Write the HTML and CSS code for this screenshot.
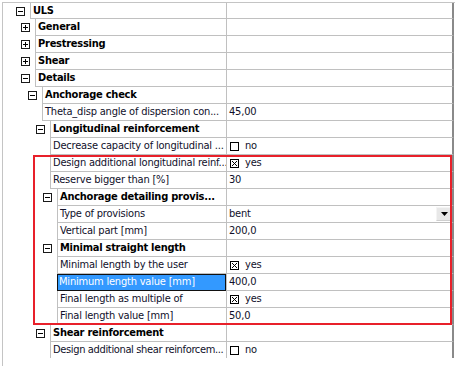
FILE: index.html
```html
<!DOCTYPE html>
<html>
<head>
<meta charset="utf-8">
<link rel="stylesheet" href="styles.css">
</head>
<body>
<div class="tree">
  <div class="rows">
    <div class="row group l0"><span class="exp"><svg width="9" height="9" viewBox="0 0 9 9"><rect x="0.5" y="0.5" width="8" height="8" fill="#fff" stroke="#1a1a1a"/><path d="M2 4.5H7" stroke="#000"/></svg></span><div class="name">ULS</div><div class="val"></div></div>
    <div class="row group l1"><span class="exp"><svg width="9" height="9" viewBox="0 0 9 9"><rect x="0.5" y="0.5" width="8" height="8" fill="#fff" stroke="#1a1a1a"/><path d="M2 4.5H7M4.5 2V7" stroke="#000"/></svg></span><div class="name">General</div><div class="val"></div></div>
    <div class="row group l1"><span class="exp"><svg width="9" height="9" viewBox="0 0 9 9"><rect x="0.5" y="0.5" width="8" height="8" fill="#fff" stroke="#1a1a1a"/><path d="M2 4.5H7M4.5 2V7" stroke="#000"/></svg></span><div class="name">Prestressing</div><div class="val"></div></div>
    <div class="row group l1"><span class="exp"><svg width="9" height="9" viewBox="0 0 9 9"><rect x="0.5" y="0.5" width="8" height="8" fill="#fff" stroke="#1a1a1a"/><path d="M2 4.5H7M4.5 2V7" stroke="#000"/></svg></span><div class="name">Shear</div><div class="val"></div></div>
    <div class="row group l1"><span class="exp"><svg width="9" height="9" viewBox="0 0 9 9"><rect x="0.5" y="0.5" width="8" height="8" fill="#fff" stroke="#1a1a1a"/><path d="M2 4.5H7" stroke="#000"/></svg></span><div class="name">Details</div><div class="val"></div></div>
    <div class="row group l2"><span class="exp"><svg width="9" height="9" viewBox="0 0 9 9"><rect x="0.5" y="0.5" width="8" height="8" fill="#fff" stroke="#1a1a1a"/><path d="M2 4.5H7" stroke="#000"/></svg></span><div class="name">Anchorage check</div><div class="val"></div></div>
    <div class="row leaf l2"><span class="exp"></span><div class="name">Theta_disp angle of dispersion con...</div><div class="val">45,00</div></div>
    <div class="row group l3"><span class="exp"><svg width="9" height="9" viewBox="0 0 9 9"><rect x="0.5" y="0.5" width="8" height="8" fill="#fff" stroke="#1a1a1a"/><path d="M2 4.5H7" stroke="#000"/></svg></span><div class="name">Longitudinal reinforcement</div><div class="val"></div></div>
    <div class="row leaf l3"><span class="exp"></span><div class="name">Decrease capacity of longitudinal ...</div><div class="val"><span class="chk"><svg width="9" height="9" viewBox="0 0 9 9"><rect x="0.5" y="0.5" width="8" height="8" fill="#fff" stroke="#000"/></svg></span>no</div></div>
    <div class="row leaf l3"><span class="exp"></span><div class="name">Design additional longitudinal reinf...</div><div class="val"><span class="chk"><svg width="9" height="9" viewBox="0 0 9 9"><rect x="0.5" y="0.5" width="8" height="8" fill="#fff" stroke="#000"/><path d="M2 2L7 7M7 2L2 7" stroke="#000"/></svg></span>yes</div></div>
    <div class="row leaf l3"><span class="exp"></span><div class="name">Reserve bigger than [%]</div><div class="val">30</div></div>
    <div class="row group l4"><span class="exp"><svg width="9" height="9" viewBox="0 0 9 9"><rect x="0.5" y="0.5" width="8" height="8" fill="#fff" stroke="#1a1a1a"/><path d="M2 4.5H7" stroke="#000"/></svg></span><div class="name">Anchorage detailing provis...</div><div class="val"></div></div>
    <div class="row leaf l4"><span class="exp"></span><div class="name">Type of provisions</div><div class="val">bent<span class="drop"><svg width="7" height="4" viewBox="0 0 7 4"><path d="M0 0H7L3.5 4Z" fill="#000"/></svg></span></div></div>
    <div class="row leaf l4"><span class="exp"></span><div class="name">Vertical part [mm]</div><div class="val">200,0</div></div>
    <div class="row group l4"><span class="exp"><svg width="9" height="9" viewBox="0 0 9 9"><rect x="0.5" y="0.5" width="8" height="8" fill="#fff" stroke="#1a1a1a"/><path d="M2 4.5H7" stroke="#000"/></svg></span><div class="name">Minimal straight length</div><div class="val"></div></div>
    <div class="row leaf l4"><span class="exp"></span><div class="name">Minimal length by the user</div><div class="val"><span class="chk"><svg width="9" height="9" viewBox="0 0 9 9"><rect x="0.5" y="0.5" width="8" height="8" fill="#fff" stroke="#000"/><path d="M2 2L7 7M7 2L2 7" stroke="#000"/></svg></span>yes</div></div>
    <div class="row leaf l4 selected"><span class="exp"></span><div class="name">Minimum length value [mm]</div><div class="val">400,0</div></div>
    <div class="row leaf l4"><span class="exp"></span><div class="name">Final length as multiple of</div><div class="val"><span class="chk"><svg width="9" height="9" viewBox="0 0 9 9"><rect x="0.5" y="0.5" width="8" height="8" fill="#fff" stroke="#000"/><path d="M2 2L7 7M7 2L2 7" stroke="#000"/></svg></span>yes</div></div>
    <div class="row leaf l4"><span class="exp"></span><div class="name">Final length value [mm]</div><div class="val">50,0</div></div>
    <div class="row group l3"><span class="exp"><svg width="9" height="9" viewBox="0 0 9 9"><rect x="0.5" y="0.5" width="8" height="8" fill="#fff" stroke="#1a1a1a"/><path d="M2 4.5H7" stroke="#000"/></svg></span><div class="name">Shear reinforcement</div><div class="val"></div></div>
    <div class="row leaf l3"><span class="exp"></span><div class="name tight">Design additional shear reinforcem...</div><div class="val"><span class="chk"><svg width="9" height="9" viewBox="0 0 9 9"><rect x="0.5" y="0.5" width="8" height="8" fill="#fff" stroke="#000"/></svg></span>no</div></div>
  </div>
  <div class="mark"></div>
</div>
</body>
</html>
```
FILE: styles.css
```css
* { box-sizing: border-box; }
html, body { margin: 0; padding: 0; background: #fff; }
body {
  font-family: "DejaVu Sans Condensed", "DejaVu Sans", sans-serif;
  font-stretch: condensed;
  font-size: 11px;
  letter-spacing: -0.2px;
  color: #10102a;
}
.tree {
  position: relative;
  margin: 2px 0 0 2px;
  width: 453px;
  border-top: 1px solid #c4c4c4;
  border-left: 1px solid #c4c4c4;
  padding-bottom: 8px;
}
.rows {
  height: 355px;
  overflow: hidden;
}
.row {
  display: flex;
  height: 17px;
  --b: 30px;
}
.row:first-child { height: 16px; }
.l0 { --b: 30px; }
.l1 { --b: 35px; }
.l2 { --b: 42px; }
.l3 { --b: 50px; }
.l4 { --b: 57px; }
.exp {
  flex: none;
  width: 9px;
  height: 9px;
  margin-left: calc(var(--b) - 17px);
  margin-right: 5px;
  align-self: center;
  display: block;
}
.exp svg { display: block; }
.name {
  flex: none;
  width: calc(226px - var(--b));
  border-left: 1px solid #c0c0c0;
  border-bottom: 1px solid #c0c0c0;
  padding-left: 2px;
  white-space: nowrap;
  overflow: hidden;
  line-height: 16px;
}
.name.tight { letter-spacing: -0.35px; }
.group .name {
  font-weight: bold;
  color: #000;
  letter-spacing: -0.25px;
}
.val {
  flex: 1;
  display: flex;
  align-items: center;
  border-left: 1px solid #c0c0c0;
  border-bottom: 1px solid #c0c0c0;
  border-right: 2px solid #8a8a8a;
  padding-left: 2px;
  white-space: nowrap;
  line-height: 16px;
  margin-right: 1px;
}
.chk {
  display: block;
  width: 9px;
  height: 9px;
  margin: 0 6px 0 1px;
}
.chk svg { display: block; }
.drop {
  margin-left: auto;
  margin-right: 0;
  width: 16px;
  height: 14px;
  background: #e8e8e8;
  border: 1px solid #f4f4f4;
  border-right-color: #cfcfcf;
  border-bottom-color: #cfcfcf;
  display: flex;
  align-items: center;
  justify-content: center;
}
.drop svg { display: block; }
.selected .name {
  background: #3399ff;
  color: #fff;
  border: 1px solid #111;
  padding-left: 1px;
  line-height: 14px;
}
.mark {
  position: absolute;
  left: 30px;
  top: 152px;
  width: 419px;
  height: 170px;
  border: 2px solid #e8202a;
  pointer-events: none;
}
```
